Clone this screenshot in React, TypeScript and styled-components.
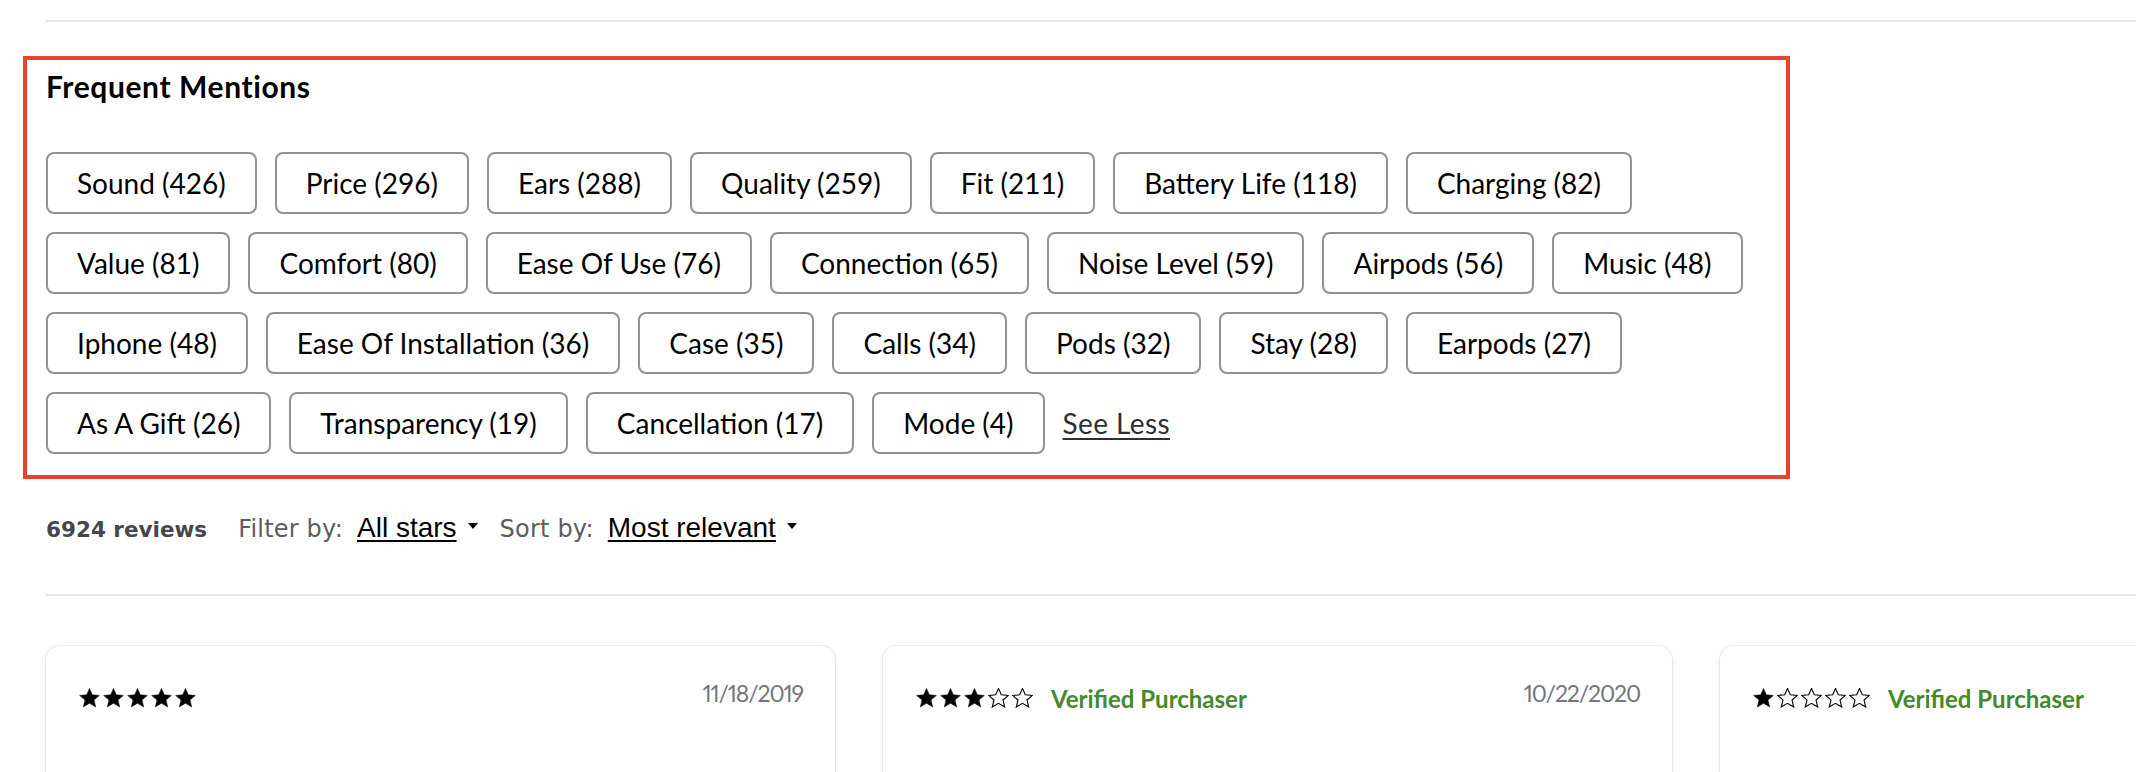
import React from 'react';
import styled, { createGlobalStyle } from 'styled-components';

const mentions: [string, number][] = [
  ['Sound', 426],
  ['Price', 296],
  ['Ears', 288],
  ['Quality', 259],
  ['Fit', 211],
  ['Battery Life', 118],
  ['Charging', 82],
  ['Value', 81],
  ['Comfort', 80],
  ['Ease Of Use', 76],
  ['Connection', 65],
  ['Noise Level', 59],
  ['Airpods', 56],
  ['Music', 48],
  ['Iphone', 48],
  ['Ease Of Installation', 36],
  ['Case', 35],
  ['Calls', 34],
  ['Pods', 32],
  ['Stay', 28],
  ['Earpods', 27],
  ['As A Gift', 26],
  ['Transparency', 19],
  ['Cancellation', 17],
  ['Mode', 4],
];

const reviews = [
  { id: 1, rating: 5, verified: false, date: '11/18/2019' },
  { id: 2, rating: 3, verified: true, date: '10/22/2020' },
  { id: 3, rating: 1, verified: true, date: '' },
];

const StarIcon = ({ filled }: { filled: boolean }) => (
  <svg width="21" height="20" viewBox="0 0 21 20">
    <path
      d="M10.5 0.4L13.3 6.8L20.4 7.4L15 12L16.7 19L10.5 15.3L4.3 19L6 12L0.6 7.4L7.7 6.8Z"
      fill={filled ? '#000' : '#fff'}
      stroke="#000"
      strokeWidth={filled ? 0.5 : 1.1}
    />
  </svg>
);

const App = () => {
  return (
    <Page>
      <GlobalStyle />
      <TopRule />
      <Highlight>
        <Heading>Frequent Mentions</Heading>
        <Chips>
          {mentions.map(([label, count]) => (
            <Chip key={label}>
              {label} ({count})
            </Chip>
          ))}
          <SeeLess>See Less</SeeLess>
        </Chips>
      </Highlight>
      <FilterRow>
        <Count>6924 reviews</Count>
        <FilterLabel>Filter by:</FilterLabel>
        <Select>
          <SelectText>All stars</SelectText>
          <Caret />
        </Select>
        <FilterLabel>Sort by:</FilterLabel>
        <Select>
          <SelectText>Most relevant</SelectText>
          <Caret />
        </Select>
      </FilterRow>
      <Divider />
      <Cards>
        {reviews.map(r => (
          <Card key={r.id}>
            <CardHeader>
              <RatingGroup>
                <Stars>
                  {[1, 2, 3, 4, 5].map(i => (
                    <StarIcon key={i} filled={i <= r.rating} />
                  ))}
                </Stars>
                {r.verified && <Verified>Verified Purchaser</Verified>}
              </RatingGroup>
              {r.date && <ReviewDate>{r.date}</ReviewDate>}
            </CardHeader>
          </Card>
        ))}
      </Cards>
    </Page>
  );
};

const GlobalStyle = createGlobalStyle`
  html, body {
    margin: 0;
    padding: 0;
    background: #fff;
    overflow: hidden;
  }
  body {
    font-family: Lato, "Liberation Sans", sans-serif;
    color: #000;
  }
`;

const Page = styled.div`
  padding: 20px 0 0 46px;
  width: 2136px;
  height: 772px;
  box-sizing: border-box;
  overflow: hidden;
`;

const TopRule = styled.div`
  height: 2px;
  background-color: #e6e7e8;
`;

const Highlight = styled.section`
  margin: 34px 0 0 -23px;
  width: 1767px;
  box-sizing: border-box;
  border: 4px solid #e9432c;
  padding: 9px 3px 21px 19px;
`;

const Heading = styled.h2`
  margin: 0;
  font-size: 30px;
  line-height: 34px;
  font-weight: 700;
  letter-spacing: 0.6px;
`;

const Chips = styled.div`
  display: flex;
  flex-wrap: wrap;
  align-items: center;
  gap: 18px;
  margin-top: 49px;
`;

const Chip = styled.button`
  display: inline-flex;
  align-items: center;
  height: 62px;
  box-sizing: border-box;
  padding: 0 29px;
  border: 2px solid #909196;
  border-radius: 8px;
  background-color: #fff;
  color: #000;
  font-family: Lato, "Liberation Sans", sans-serif;
  font-size: 28px;
  white-space: nowrap;
  cursor: pointer;
`;

const SeeLess = styled.a`
  font-size: 28px;
  color: #2e2f32;
  letter-spacing: 0.4px;
  text-decoration: underline;
  text-decoration-thickness: 2px;
  text-underline-offset: 4px;
  cursor: pointer;
`;

const FilterRow = styled.div`
  display: flex;
  align-items: baseline;
  height: 40px;
  line-height: 40px;
  margin-top: 29px;
`;

const Count = styled.span`
  font-family: "DejaVu Sans", sans-serif;
  font-weight: 700;
  font-size: 21.5px;
  color: #46474a;
  margin-right: 31px;
`;

const FilterLabel = styled.span`
  font-family: "DejaVu Sans", sans-serif;
  font-size: 24px;
  letter-spacing: 0.2px;
  color: #5b5c5f;
  margin-right: 14px;
`;

const Select = styled.span`
  display: inline-flex;
  align-items: baseline;
  margin-right: 22px;
  cursor: pointer;
`;

const SelectText = styled.span`
  font-family: "Liberation Sans", Arial, sans-serif;
  font-size: 28px;
  color: #000;
  text-decoration: underline;
  text-decoration-thickness: 2px;
  text-underline-offset: 3px;
`;

const Caret = styled.span`
  width: 0;
  height: 0;
  margin-left: 11px;
  border-left: 5.5px solid transparent;
  border-right: 5.5px solid transparent;
  border-top: 6px solid #000;
  align-self: center;
  transform: translateY(-2px);
`;

const Divider = styled.div`
  height: 2px;
  margin-top: 46px;
  background-color: #e6e7e8;
`;

const Cards = styled.div`
  display: flex;
  gap: 48px;
  margin-top: 50px;
`;

const Card = styled.article`
  flex: 0 0 789px;
  height: 200px;
  box-sizing: border-box;
  padding: 32px 32px 32px 33px;
  border-radius: 14px;
  background-color: #fff;
  box-shadow: 0 0 0 1px rgba(0, 0, 0, 0.05), 0 1px 4px rgba(0, 0, 0, 0.12);
`;

const CardHeader = styled.div`
  display: flex;
  justify-content: space-between;
  align-items: flex-start;
`;

const RatingGroup = styled.div`
  display: flex;
  align-items: center;
  gap: 18px;
  height: 40px;
`;

const Stars = styled.div`
  display: flex;
  gap: 3px;
`;

const Verified = styled.span`
  font-size: 24px;
  font-weight: 700;
  color: #44892a;
`;

const ReviewDate = styled.span`
  font-size: 23px;
  line-height: 30px;
  color: #74767c;
  letter-spacing: -1.1px;
  font-variant-numeric: proportional-nums;
`;

export default App;
